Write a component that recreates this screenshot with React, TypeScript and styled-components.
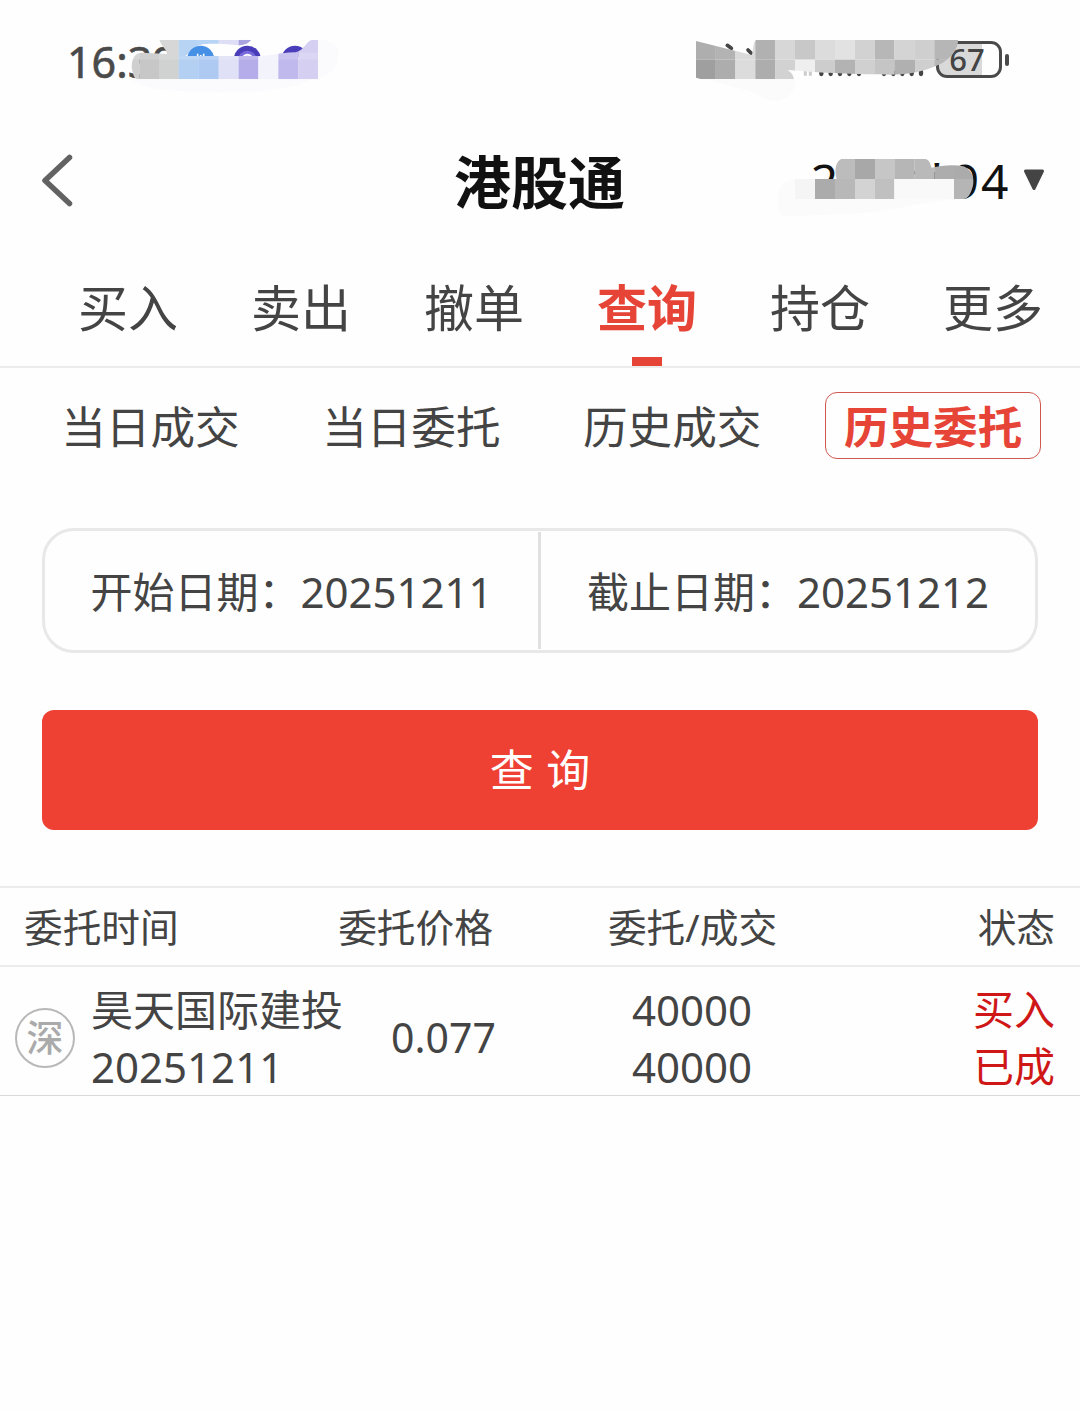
import React from 'react';
import styled, { createGlobalStyle, css } from 'styled-components';

const GlobalStyle = createGlobalStyle`
  *, *::before, *::after { box-sizing: border-box; }
  body {
    margin: 0;
    background: #fefefe;
    color: #444;
    font-family: "Noto Sans", "Noto Sans CJK SC", sans-serif;
  }
`;

const Page = styled.main`
  width: 1080px;
  height: 1410px;
  display: flex;
  flex-direction: column;
  background: #fefefe;
  overflow: hidden;
`;

const StatusBar = styled.header`
  position: relative;
  height: 122px;
  padding: 0 71px 0 67px;
  display: flex;
  align-items: center;
  justify-content: space-between;
`;

const Clock = styled.span`
  padding-top: 2px;
  font-size: 43px;
  line-height: 60px;
  -webkit-text-stroke: 0.6px #4a4a4a;
  color: #4a4a4a;
`;

const Battery = styled.div`
  display: flex;
  align-items: center;
  gap: 3px;
  margin-top: -3px;
`;

const BatteryBody = styled.div`
  width: 66px;
  height: 37px;
  padding-right: 4px;
  border: 3px solid #4a4a4a;
  border-radius: 11px;
  background: linear-gradient(to right, #d9d9d9 43px, #fefefe 43px);
  display: flex;
  align-items: center;
  justify-content: center;
  font-size: 31px;
  line-height: 31px;
  font-weight: 500;
  color: #444;
`;

const BatteryTip = styled.i`
  width: 4px;
  height: 12px;
  border-radius: 2px;
  background: #4a4a4a;
`;

const Mosaic = styled.svg<{ $x: number; $y: number }>`
  position: absolute;
  left: ${p => p.$x}px;
  top: ${p => p.$y}px;
`;

const TitleBar = styled.div`
  position: relative;
  height: 118px;
  padding: 0 35px 0 41px;
  display: grid;
  grid-template-columns: 413px 171px 1fr;
  align-items: center;
`;

const BackIcon = styled.svg`
  display: block;
`;

const Title = styled.h1`
  margin: 0;
  padding-top: 2px;
  font-size: 57px;
  line-height: 80px;
  font-weight: 700;
  color: #111;
`;

const Account = styled.div`
  display: flex;
  align-items: center;
  justify-content: flex-end;
  gap: 13px;
  font-size: 48px;
  line-height: 60px;
  color: #111;
`;

const AccountNumber = styled.span`
  letter-spacing: 1.6px;
`;

const AccountArrow = styled.svg`
  margin-bottom: 3px;
`;

const Tabs = styled.nav`
  height: 128px;
  padding: 0 0 0 41.5px;
  display: grid;
  grid-template-columns: repeat(6, 173px);
  border-bottom: 2px solid #ececec;
`;

const Tab = styled.a<{ $active?: boolean }>`
  display: flex;
  flex-direction: column;
  align-items: center;
  justify-content: space-between;
  padding-top: 33px;
  font-size: 50px;
  line-height: 70px;
  ${p => p.$active && css`
    color: #e64437;
    font-weight: 700;
    &::after {
      content: '';
      width: 30px;
      height: 9px;
      background: #e64437;
    }
  `}
`;

const SubTabs = styled.nav`
  height: 160px;
  padding: 24px 0 0 20px;
  display: grid;
  grid-template-columns: repeat(4, 260.9px);
  justify-items: center;
  align-items: start;
`;

const SubTab = styled.a<{ $active?: boolean }>`
  width: 216px;
  height: 67px;
  padding-bottom: 2px;
  border: 1.5px solid transparent;
  border-radius: 12px;
  display: flex;
  align-items: center;
  justify-content: center;
  font-size: 44.6px;
  ${p => p.$active && css`
    border-color: #cf584f;
    color: #e64437;
    font-weight: 700;
  `}
`;

const DateRange = styled.div`
  height: 125px;
  margin: 0 42px;
  border: 3px solid #e8e8e8;
  border-radius: 32px;
  display: grid;
  grid-template-columns: 493px 3px 1fr;
  align-items: center;
`;

const DateField = styled.div`
  padding-top: 2px;
  text-align: center;
  font-size: 42px;
  line-height: 60px;
  white-space: nowrap;
`;

const Divider = styled.i`
  height: 117px;
  background: #e0e0e0;
`;

const QueryButton = styled.button`
  height: 120px;
  margin: 57px 42px 56px;
  padding: 0 0 5px;
  border: 0;
  border-radius: 12px;
  background: #ef4034;
  color: #fff;
  font: inherit;
  font-size: 44px;
  word-spacing: 1px;
`;

const TableHead = styled.div`
  height: 81px;
  border-top: 2px solid #ececec;
  border-bottom: 2px solid #ececec;
  padding: 0 25px 0 24px;
  display: grid;
  grid-template-columns: 283px 217px 337px 1fr;
  align-items: center;
  font-size: 38.7px;
  line-height: 56px;
`;

const TableRow = styled.div`
  height: 129px;
  border-bottom: 1px solid #d9d9d9;
  padding: 13px 25px 0 15px;
  display: grid;
  grid-template-columns: 76px 256px 193px 304px 1fr;
  align-items: center;
  font-size: 42px;
  line-height: 57px;
`;

const Cell = styled.div<{ $align?: 'center' | 'right'; $red?: boolean; $small?: boolean }>`
  display: flex;
  flex-direction: column;
  white-space: nowrap;
  text-align: ${p => p.$align ?? 'left'};
  ${p => p.$small && css`font-size: 41px;`}
  color: ${p => (p.$red ? '#cf1717' : 'inherit')};
`;

const MarketBadge = styled.span`
  width: 60px;
  height: 60px;
  border: 2.5px solid #b8b8b8;
  border-radius: 50%;
  display: flex;
  align-items: center;
  justify-content: center;
  font-size: 37px;
  line-height: 50px;
  font-weight: 500;
  color: #aaa;
`;

type Tile = [x: number, y: number, width: number, fill: string];

const Tiles = ({ tiles, height = 60 }: { tiles: Tile[]; height?: number }) => (
  <>
    {tiles.map(([x, y, w, fill]) => (
      <rect key={`${x}-${y}`} x={x} y={y} width={w + 0.5} height={height} fill={fill} />
    ))}
  </>
);

const NoticeMosaic = () => (
  <Mosaic $x={50} $y={25} width="300" height="80" viewBox="0 0 900 240">
    <defs>
      <clipPath id="notice-top">
        <path d="M328 44H604C594 58 575 62 555 60C520 57 475 54 450 60C425 67 420 86 405 93L352 92C351 72 335 65 328 44Z" />
      </clipPath>
      <clipPath id="notice-low">
        <path d="M245 130C244 107 252 84 275 83L350 87L410 93H630C670 91 690 84 730 82C765 80 768 44 790 44H804V163H262C248 158 250 142 245 130Z" />
      </clipPath>
      <clipPath id="notice-icons">
        <rect x="400" y="60" width="370" height="36" />
      </clipPath>
    </defs>
    <path d="M245 160C270 200 420 203 560 202C660 200 730 190 780 163C840 158 865 130 865 85C864 52 835 44 804 44V163Z" fill="#fbfbfd" />
    <g clipPath="url(#notice-top)">
      <Tiles tiles={[[327, 44, 59, '#d7d7d7'], [386, 44, 60, '#b7d4f4'], [446, 44, 60, '#b9d5f5'], [506, 44, 60, '#dedff7'], [566, 44, 60, '#a9a4df']]} />
    </g>
    <g clipPath="url(#notice-icons)">
      <circle cx="452" cy="103" r="41" fill="#4690e6" />
      <path d="M443 86v9M452 90v5M461 86v9" stroke="#fff" strokeWidth="5" />
      <circle cx="592" cy="103" r="41" fill="#4a3dba" />
      <circle cx="592" cy="105" r="28" fill="#7a6bdd" />
      <path d="M581 94Q592 84 604 94" fill="none" stroke="#fff" strokeWidth="6" />
      <circle cx="735" cy="103" r="41" fill="#4a3dba" />
    </g>
    <g clipPath="url(#notice-low)">
      <Tiles height={120} tiles={[[240, 44, 28, '#cfcfcf'], [268, 44, 59, '#c7c7c7'], [327, 44, 59, '#cfd2d1'], [386, 44, 60, '#b3d0f3'], [446, 44, 60, '#aecaf2'], [506, 44, 60, '#e0e0f6'], [566, 44, 59, '#b4adea'], [625, 44, 60, '#f3f3fc'], [685, 44, 60, '#c0b9ed'], [745, 44, 59, '#d5cff1']]} />
      <rect x="240" y="83" width="564" height="21" fill="#fff" opacity="0.15" />
    </g>
  </Mosaic>
);

const SignalMosaic = () => (
  <Mosaic $x={680} $y={25} width="255" height="80" viewBox="0 0 765 240">
    <path d="M226 163H342C355 190 320 229 285 229C245 225 235 200 160 186L90 166Z" fill="#fbfbfb" />
    <path d="M142 61L154 70M204 75L214 85" stroke="#444" strokeWidth="11" strokeLinecap="round" />
    <path d="M376 138v14M391 138v14" stroke="#ccc" strokeWidth="9" />
    <path d="M424 143v4M452 143v4M480 143v4M508 143v4M537 143v4M612 143v4M640 143v4M667 143v4M695 143v4M723 140v7" stroke="#444" strokeWidth="13" strokeLinecap="round" />
  </Mosaic>
);

const SignalCover = () => (
  <Mosaic $x={680} $y={25} width="300" height="80" viewBox="0 0 900 240">
    <defs>
      <clipPath id="signal-clip">
        <path d="M48 48L215 90C222 80 217 44 232 44H835C830 90 795 113 760 126C710 147 650 151 600 148C510 148 410 142 322 135C335 142 340 151 342 163H64L48 158Z" />
      </clipPath>
    </defs>
    <g clipPath="url(#signal-clip)">
      <Tiles tiles={[
        [48, 44, 59, '#aeaeae'], [107, 44, 59, '#b3b3b3'], [166, 44, 60, '#dadada'], [226, 44, 60, '#b1b1b1'], [286, 44, 59, '#d7d7d7'], [345, 44, 60, '#c8c8c8'], [405, 44, 60, '#dcdcdc'], [465, 44, 60, '#e2e2e2'], [525, 44, 60, '#d2d2d2'], [585, 44, 58, '#b7b7b7'], [643, 44, 62, '#d4d4d4'], [705, 44, 58, '#cfcfcf'], [763, 44, 75, '#b6b6b6'],
        [48, 104, 59, '#9f9f9f'], [107, 104, 59, '#adadad'], [166, 104, 60, '#dcdcdc'], [226, 104, 60, '#adadad'], [286, 104, 59, '#d2d2d2'], [345, 104, 60, '#efefef'], [405, 104, 60, '#cdcdcd'], [465, 104, 60, '#b3b3b3'], [525, 104, 60, '#d0d0d0'], [585, 104, 58, '#c5c5c5'], [643, 104, 62, '#b0b0b0'], [705, 104, 58, '#cfcfcf'], [763, 104, 75, '#b7b7b7'],
      ]} />
    </g>
  </Mosaic>
);

const AccountMosaic = () => (
  <Mosaic $x={770} $y={18} width="210" height="80" viewBox="0 0 630 240">
    <defs>
      <clipPath id="account-clip">
        <path d="M75 117H200C192 95 197 63 214 57H466C480 60 480 72 485 83C515 76 550 73 580 79C605 88 616 115 608 140C603 158 595 177 580 177H75Z" />
      </clipPath>
    </defs>
    <path d="M75 117C40 120 25 140 25 180C25 210 30 229 45 229C150 225 280 224 370 208C440 190 490 188 552 177H75Z" fill="#fbfbfb" />
    <g clipPath="url(#account-clip)">
      <Tiles tiles={[
        [195, 57, 60, '#bcbcbc'], [255, 57, 60, '#a8a8a8'], [315, 57, 58, '#c6c6c6'], [373, 57, 60, '#b6b6b6'], [433, 57, 60, '#b9b9b9'], [493, 57, 59, '#adadad'], [552, 57, 62, '#ababab'],
        [75, 117, 60, '#f5f5f5'], [135, 117, 60, '#ababab'], [195, 117, 60, '#b8b8b8'], [255, 117, 60, '#d3d3d3'], [315, 117, 58, '#c0c0c0'], [373, 117, 179, '#f9f9f9'], [552, 117, 62, '#b5b5b5'],
      ]} />
    </g>
  </Mosaic>
);

const TABS = ['买入', '卖出', '撤单', '查询', '持仓', '更多'];
const SUB_TABS = ['当日成交', '当日委托', '历史成交', '历史委托'];

export default function App() {
  return (
    <Page>
      <GlobalStyle />
      <StatusBar>
        <Clock>16:39</Clock>
        <NoticeMosaic />
        <SignalMosaic />
        <Battery>
          <BatteryBody>67</BatteryBody>
          <BatteryTip />
        </Battery>
        <SignalCover />
      </StatusBar>
      <TitleBar>
        <BackIcon width="32" height="54" viewBox="0 0 32 54" fill="none" stroke="#626262" strokeWidth="5.5" strokeLinecap="round" strokeLinejoin="round">
          <path d="M28.5 3.5L4 26.5L28.5 49.5" />
        </BackIcon>
        <Title>港股通</Title>
        <Account>
          <AccountNumber>2****94</AccountNumber>
          <AccountArrow width="22" height="22" viewBox="0 0 22 22">
            <path d="M2.5 2H19.5L11 19.5Z" fill="#444" stroke="#444" strokeWidth="3" strokeLinejoin="round" />
          </AccountArrow>
        </Account>
        <AccountMosaic />
      </TitleBar>
      <Tabs>
        {TABS.map(t => <Tab key={t} $active={t === '查询'}>{t}</Tab>)}
      </Tabs>
      <SubTabs>
        {SUB_TABS.map(t => <SubTab key={t} $active={t === '历史委托'}>{t}</SubTab>)}
      </SubTabs>
      <DateRange>
        <DateField>开始日期：20251211</DateField>
        <Divider />
        <DateField>截止日期：20251212</DateField>
      </DateRange>
      <QueryButton>查 询</QueryButton>
      <TableHead>
        <Cell>委托时间</Cell>
        <Cell $align="center">委托价格</Cell>
        <Cell $align="center">委托/成交</Cell>
        <Cell $align="right">状态</Cell>
      </TableHead>
      <TableRow>
        <MarketBadge>深</MarketBadge>
        <Cell><span>昊天国际建投</span><span>20251211</span></Cell>
        <Cell $align="center" $small>0.077</Cell>
        <Cell $align="center"><span>40000</span><span>40000</span></Cell>
        <Cell $align="right" $red $small><span>买入</span><span>已成</span></Cell>
      </TableRow>
    </Page>
  );
}
